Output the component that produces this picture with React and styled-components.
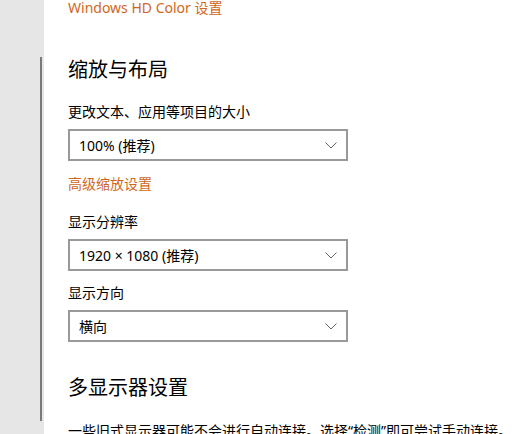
import styled, { createGlobalStyle } from "styled-components";

const GlobalStyle = createGlobalStyle`
    html, body {
        margin: 0;
        padding: 0;
        background: #ffffff;
    }
    body {
        font-family: "Noto Sans", "Noto Sans CJK SC", sans-serif;
        color: #000000;
    }
`

const Page = styled.div`
    width: 530px;
    height: 434px;
    display: flex;
    flex-direction: row;
    overflow: hidden;
`

const Sidebar = styled.div`
    width: 44px;
    flex-shrink: 0;
    background-color: #e6e6e6;
    display: flex;
    flex-direction: column;
    align-items: flex-end;
    padding: 57px 2px 0 0;
    box-sizing: border-box;
`

const ScrollThumb = styled.div`
    width: 2px;
    height: 364px;
    background-color: #7a7a7a;
`

const Content = styled.div`
    flex: 1;
    display: flex;
    flex-direction: column;
    align-items: flex-start;
    padding-left: 24px;
    margin-top: -2px;

    & > * {
        flex-shrink: 0;
    }
`

const Link = styled.a`
    font-size: 14px;
    line-height: 20px;
    color: #d0671f;
    margin-top: ${props => props.top || 0}px;
    cursor: pointer;
`

const Heading = styled.h2`
    font-size: 20px;
    font-weight: normal;
    line-height: 28px;
    margin: ${props => props.top}px 0 0 0;
`

const Label = styled.div`
    font-size: 14px;
    line-height: 20px;
    margin-top: ${props => props.top}px;
`

const Select = styled.div`
    width: 280px;
    height: 32px;
    box-sizing: border-box;
    border: 2px solid #999999;
    margin-top: ${props => props.top}px;
    display: flex;
    align-items: center;
    justify-content: space-between;
    padding: 0 9px 0 9px;
    font-size: 14px;
`

const Chevron = () => (
    <svg width="12" height="7" viewBox="0 0 12 7">
        <path d="M0.5 0.5 L6 6 L11.5 0.5" fill="none" stroke="#666666" strokeWidth="1" />
    </svg>
)

const Paragraph = styled.div`
    font-size: 14px;
    line-height: 20px;
    white-space: nowrap;
    margin-top: ${props => props.top}px;
`

const App = () => {
    return (
        <Page>
            <GlobalStyle />
            <Sidebar>
                <ScrollThumb />
            </Sidebar>
            <Content>
                <Link>Windows HD Color 设置</Link>
                <Heading top={38}>缩放与布局</Heading>
                <Label top={18}>更改文本、应用等项目的大小</Label>
                <Select top={7}>
                    <span>100% (推荐)</span>
                    <Chevron />
                </Select>
                <Link top={13}>高级缩放设置</Link>
                <Label top={18}>显示分辨率</Label>
                <Select top={7}>
                    <span>1920 × 1080 (推荐)</span>
                    <Chevron />
                </Select>
                <Label top={12}>显示方向</Label>
                <Select top={7}>
                    <span>横向</span>
                    <Chevron />
                </Select>
                <Heading top={32}>多显示器设置</Heading>
                <Paragraph top={19}>一些旧式显示器可能不会进行自动连接。选择“检测”即可尝试手动连接。</Paragraph>
            </Content>
        </Page>
    )
}

export default App
